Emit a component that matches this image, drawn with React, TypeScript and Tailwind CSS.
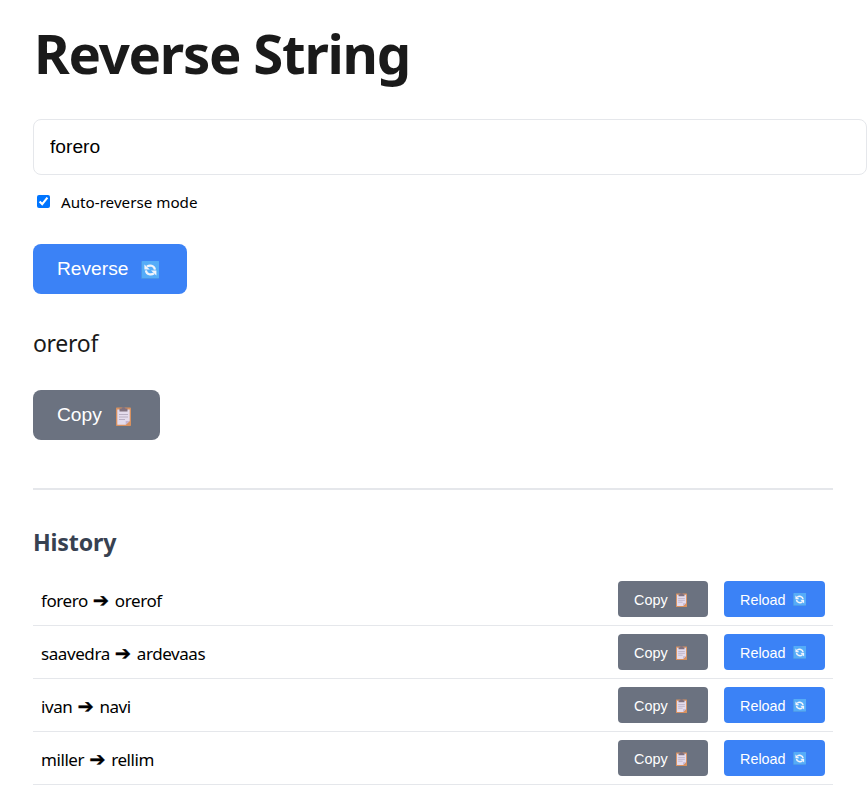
import { useState } from "react";

function ReloadIcon({ className }: { className: string }) {
  return (
    <svg viewBox="0 0 18 18" className={className} aria-hidden="true">
      <rect width="18" height="18" rx="1" fill="#4b94e6" />
      <rect x="1" width="17" height="17" rx="0.5" fill="#55acf8" />
      <g fill="none" stroke="#f2f4fb" strokeWidth="2.2">
        <path d="M6 5.4C8.5 4 13.3 4 13.9 8.6" />
        <path d="M12.9 12.5C10.5 14 5.5 14 4.9 9.4" />
      </g>
      <path d="M3.4 3.4v5.2h5.4zM15.4 14.6V9.4H10z" fill="#f2f4fb" />
    </svg>
  );
}

function ClipboardIcon({ className }: { className: string }) {
  return (
    <svg viewBox="0 0 15 19" className={className} aria-hidden="true">
      <rect y="0.5" width="15" height="18.5" rx="0.8" fill="#d9915f" />
      <path d="M1.3 2.5h12.4V14l-4 3.7H1.3z" fill="#e4dced" />
      <path d="M9.7 17.7V14h4z" fill="#c5b5d2" />
      <path d="M3.5 1.5h2a2 1.5 0 0 1 4 0h2v3h-8z" fill="#80717f" />
      <path d="M3 7.5h9M3 10h9M3 12.5h6" stroke="#b9afc4" strokeWidth="1.1" />
    </svg>
  );
}

const history = [
  { source: "forero", result: "orerof" },
  { source: "saavedra", result: "ardevaas" },
  { source: "ivan", result: "navi" },
  { source: "miller", result: "rellim" },
];

export default function App() {
  const [text, setText] = useState("forero");
  const [auto, setAuto] = useState(true);
  const [manual, setManual] = useState("orerof");
  const reversed = Array.from(text).reverse().join("");

  return (
    <main className="h-[803px] w-full overflow-hidden bg-white pl-[33px] font-['Noto_Sans',sans-serif] text-black">
      <h1 className="h-[94px] pt-[13px] pl-px text-[54.5px] leading-[80px] font-bold tracking-[-1.25px] whitespace-nowrap text-[#1a1a1a]">
        Reverse String
      </h1>
      <input
        aria-label="Text"
        value={text}
        onChange={(e) => setText(e.target.value)}
        className="mt-[25px] block h-14 w-full rounded-lg border border-[#e5e7eb] px-4 font-['Liberation_Sans',sans-serif] text-[19.2px] outline-none"
      />
      <label className="mt-[17px] flex h-5 w-max items-center pl-1 text-[15.2px] leading-5">
        <input
          type="checkbox"
          checked={auto}
          onChange={(e) => setAuto(e.target.checked)}
          className="mr-[11px] mb-px size-[13px] accent-[#0075ff]"
        />
        <span>Auto-reverse mode</span>
      </label>
      <button
        onClick={() => setManual(reversed)}
        className="mt-8 flex h-[50px] w-[154px] items-center rounded-lg bg-[#3b82f6] pl-6 font-['Liberation_Sans',sans-serif] text-[19.2px] text-white"
      >
        <span className="w-[84px] text-left">Reverse</span>
        <ReloadIcon className="mt-px size-[18px]" />
      </button>
      <p className="mt-[29px] mb-[27px] h-10 text-[23px] leading-10 tracking-[-0.3px] text-[#1a1a1a]">
        {auto ? reversed : manual}
      </p>
      <button className="flex h-[50px] w-[127px] items-center rounded-lg bg-[#6b7280] pl-6 font-['Liberation_Sans',sans-serif] text-[19.2px] text-white">
        <span className="w-[59px] text-left">Copy</span>
        <ClipboardIcon className="mt-0.5 h-[19px] w-[15px]" />
      </button>
      <section className="mt-12 w-[800px] border-t-2 border-[#e5e7eb] pt-8">
        <h2 className="h-10 text-[23.2px] leading-10 font-bold tracking-[-0.15px] text-[#374151]">History</h2>
        <ul className="mt-[11px]">
          {history.map((entry) => (
            <li key={entry.source} className="flex h-[53px] items-center gap-4 border-b border-[#e5e7eb] px-2">
              <span className="flex-1 pt-1 text-[17px] leading-6 tracking-[-0.42px]">
                {entry.source}{" "}
                <span className="mx-px inline-block w-[17px] font-['DejaVu_Sans',sans-serif] text-[19.5px] leading-5 [-webkit-text-stroke:0.3px_black]">➔</span>{" "}
                {entry.result}
              </span>
              <button className="flex h-9 w-[90px] items-center rounded bg-[#6b7280] pl-4 font-['Liberation_Sans',sans-serif] text-[14.4px] text-white">
                <span className="w-[42px] pt-1 text-left">Copy</span>
                <ClipboardIcon className="mt-0.5 h-[14px] w-[11px]" />
              </button>
              <button className="flex h-9 w-[101px] items-center rounded bg-[#3b82f6] pl-4 font-['Liberation_Sans',sans-serif] text-[14.4px] text-white">
                <span className="w-[53px] pt-1 text-left">Reload</span>
                <ReloadIcon className="mt-px size-[13px]" />
              </button>
            </li>
          ))}
        </ul>
      </section>
    </main>
  );
}
